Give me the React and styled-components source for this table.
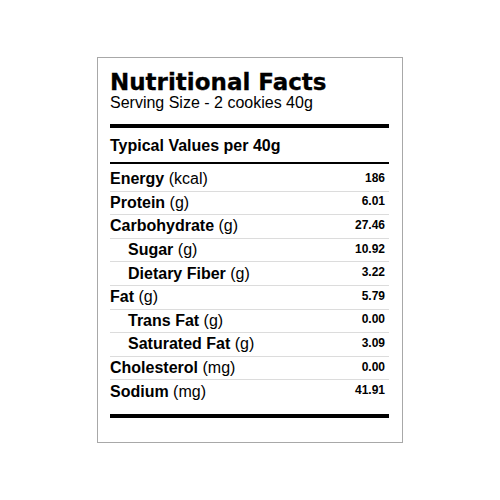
import React from "react";
import styled, { createGlobalStyle } from "styled-components";

const nutrients = [
  { name: "Energy", unit: "kcal", value: "186" },
  { name: "Protein", unit: "g", value: "6.01" },
  { name: "Carbohydrate", unit: "g", value: "27.46" },
  { name: "Sugar", unit: "g", value: "10.92", sub: true },
  { name: "Dietary Fiber", unit: "g", value: "3.22", sub: true },
  { name: "Fat", unit: "g", value: "5.79" },
  { name: "Trans Fat", unit: "g", value: "0.00", sub: true },
  { name: "Saturated Fat", unit: "g", value: "3.09", sub: true },
  { name: "Cholesterol", unit: "mg", value: "0.00" },
  { name: "Sodium", unit: "mg", value: "41.91" },
];

export default function App() {
  return (
    <>
      <GlobalStyle />
      <Page>
        <Label>
          <Header>
            <Title>Nutritional Facts</Title>
            <Serving>Serving Size - 2 cookies 40g</Serving>
          </Header>
          <PerLine>Typical Values per 40g</PerLine>
          <List>
            {nutrients.map((n) => (
              <Row key={n.name} $sub={n.sub}>
                <Name>
                  <b>{n.name}</b> ({n.unit})
                </Name>
                <Value>{n.value}</Value>
              </Row>
            ))}
          </List>
          <Footer />
        </Label>
      </Page>
    </>
  );
}

const GlobalStyle = createGlobalStyle`
  body {
    margin: 0;
    background: #ffffff;
    font-family: "Liberation Sans", Arial, sans-serif;
    color: #000;
  }
`;

const Page = styled.div`
  min-height: 100vh;
  display: flex;
  align-items: center;
  justify-content: center;
`;

const Label = styled.div`
  width: 306px;
  height: 386px;
  box-sizing: border-box;
  border: 1px solid #a8a8a8;
  padding: 12px 13px 0 12px;
  background: #fff;
`;

const Header = styled.div`
  padding-bottom: 12px;
  border-bottom: 4px solid #000;
`;

const Title = styled.h1`
  margin: 0;
  font-family: "DejaVu Sans", sans-serif;
  font-weight: 700;
  font-size: 23px;
  line-height: 24px;
  -webkit-text-stroke: 0.3px #000;
`;

const Serving = styled.div`
  font-size: 16px;
  line-height: 18px;
`;

const PerLine = styled.div`
  padding: 9px 0 7px;
  font-size: 16px;
  line-height: 18px;
  font-weight: 700;
  border-bottom: 2px solid #000;
`;

const List = styled.div`
  padding-top: 4px;
  border-bottom: 4px solid #000;
  padding-bottom: 10px;
`;

const Row = styled.div`
  height: 23.6px;
  box-sizing: border-box;
  display: flex;
  align-items: center;
  justify-content: space-between;
  padding: 0 4px 0 ${(p) => (p.$sub ? "18px" : "0")};
  border-bottom: 1px solid #dcdcdc;
  &:last-child {
    border-bottom-color: transparent;
  }
`;

const Name = styled.span`
  font-size: 16px;
  line-height: 18px;
  b {
    font-weight: 700;
  }
`;

const Value = styled.span`
  font-size: 12px;
  line-height: 14px;
  font-weight: 700;
  padding-bottom: 3px;
`;

const Footer = styled.div``;
